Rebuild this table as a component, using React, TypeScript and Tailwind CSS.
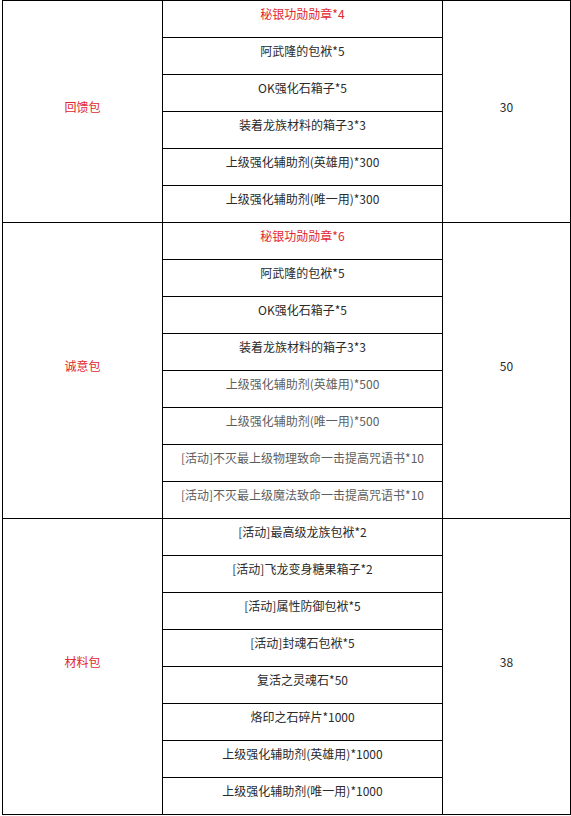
type Item = { text: string; tone: "red" | "dark" | "gray" };

type Pack = { name: string; price: string; items: Item[] };

const packs: Pack[] = [
  {
    name: "回馈包",
    price: "30",
    items: [
      { text: "秘银功勋勋章*4", tone: "red" },
      { text: "阿武隆的包袱*5", tone: "dark" },
      { text: "OK强化石箱子*5", tone: "dark" },
      { text: "装着龙族材料的箱子3*3", tone: "dark" },
      { text: "上级强化辅助剂(英雄用)*300", tone: "dark" },
      { text: "上级强化辅助剂(唯一用)*300", tone: "dark" },
    ],
  },
  {
    name: "诚意包",
    price: "50",
    items: [
      { text: "秘银功勋勋章*6", tone: "red" },
      { text: "阿武隆的包袱*5", tone: "dark" },
      { text: "OK强化石箱子*5", tone: "dark" },
      { text: "装着龙族材料的箱子3*3", tone: "dark" },
      { text: "上级强化辅助剂(英雄用)*500", tone: "gray" },
      { text: "上级强化辅助剂(唯一用)*500", tone: "gray" },
      { text: "[活动]不灭最上级物理致命一击提高咒语书*10", tone: "gray" },
      { text: "[活动]不灭最上级魔法致命一击提高咒语书*10", tone: "gray" },
    ],
  },
  {
    name: "材料包",
    price: "38",
    items: [
      { text: "[活动]最高级龙族包袱*2", tone: "dark" },
      { text: "[活动]飞龙变身糖果箱子*2", tone: "dark" },
      { text: "[活动]属性防御包袱*5", tone: "dark" },
      { text: "[活动]封魂石包袱*5", tone: "dark" },
      { text: "复活之灵魂石*50", tone: "dark" },
      { text: "烙印之石碎片*1000", tone: "dark" },
      { text: "上级强化辅助剂(英雄用)*1000", tone: "dark" },
      { text: "上级强化辅助剂(唯一用)*1000", tone: "dark" },
    ],
  },
];

const toneClass = {
  red: "text-[#e0282e]",
  dark: "text-[#2a2a2a]",
  gray: "text-[#5e5e5e]",
};

export default function App() {
  return (
    <div className="bg-white w-[571px] h-[816px] overflow-hidden pl-[2px] font-['Microsoft_YaHei','Noto_Sans_CJK_SC',sans-serif] text-[12px]">
      <table className="border-collapse w-[568px] table-fixed">
        <colgroup>
          <col className="w-[160px]" />
          <col className="w-[280px]" />
          <col className="w-[128px]" />
        </colgroup>
        <tbody>
          {packs.map((pack) =>
            pack.items.map((item, i) => (
              <tr key={pack.name + i} className="h-[37px]">
                {i === 0 && (
                  <td
                    rowSpan={pack.items.length}
                    className="border border-black text-center align-middle pb-[9px] text-[#e0282e]"
                  >
                    {pack.name}
                  </td>
                )}
                <td className="border border-black text-center align-top p-0 pt-[4px] leading-[18px]">
                  <span className={toneClass[item.tone]}>{item.text}</span>
                </td>
                {i === 0 && (
                  <td
                    rowSpan={pack.items.length}
                    className="border border-black text-center align-middle pb-[9px] text-[#2a2a2a]"
                  >
                    {pack.price}
                  </td>
                )}
              </tr>
            ))
          )}
        </tbody>
      </table>
    </div>
  );
}
